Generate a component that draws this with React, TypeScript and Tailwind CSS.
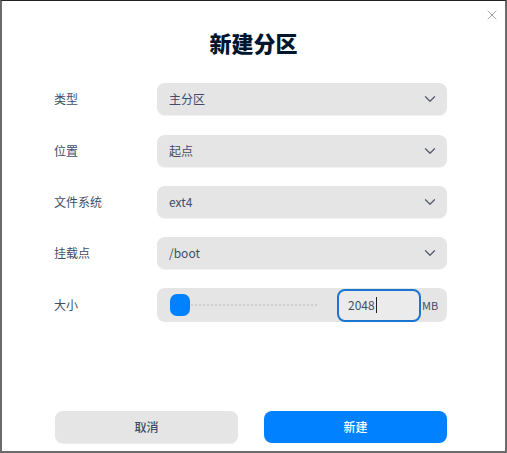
import { ChevronDown, X } from "lucide-react"

const font = { fontFamily: '"Noto Sans CJK SC", "Noto Sans", sans-serif' }

const rows = [
  { label: "类型", value: "主分区" },
  { label: "位置", value: "起点" },
  { label: "文件系统", value: "ext4" },
  { label: "挂载点", value: "/boot" },
]

function SelectBox({ value }: { value: string }) {
  return (
    <div className="flex h-[32px] w-[290px] items-center justify-between rounded-[8px] bg-[#e5e5e5] pl-[12px] pr-[8px] shadow-[0_1px_1px_rgba(0,0,0,0.06)]">
      <span className="text-[12px] text-[#414d68]">{value}</span>
      <ChevronDown className="h-[18px] w-[18px] text-[#555e6e]" strokeWidth={1.7} />
    </div>
  )
}

export default function App() {
  return (
    <div
      className="relative flex h-[453px] w-[507px] flex-col border-x-2 border-b-2 border-t border-x-[#6b6b6b] border-b-[#6b6b6b] border-t-[#222] bg-white"
      style={font}
    >
      {/* close button */}
      <button className="absolute right-[5px] top-[6px] text-[#8a8f99]">
        <X className="h-[16px] w-[16px]" strokeWidth={1.2} />
      </button>

      <h1 className="mt-[25px] text-center text-[22px] font-black leading-[32px] text-[#00162c]">新建分区</h1>

      {/* Form */}
      <div className="mt-[25px] flex flex-col gap-[19px] pl-[52px]">
        {rows.map((row, i) => (
          <div key={row.label} className={`flex items-center ${i === 1 ? "mt-[1px]" : ""}`}>
            <span className="w-[103px] text-[12px] text-[#414d68]">{row.label}</span>
            <SelectBox value={row.value} />
          </div>
        ))}

        <div className="flex items-center">
          <span className="w-[103px] text-[12px] text-[#414d68]">大小</span>
          <div className="flex h-[34px] w-[290px] items-center rounded-[8px] bg-[#e5e5e5]">
            <div className="ml-[13px] h-[22px] w-[20px] rounded-[7px] bg-[#0081ff]" />
            <div className="ml-[1px] h-0 w-[126px] border-t-2 border-dotted border-[#cfcfcf]" />
            <div className="ml-[20px] flex h-[33px] w-[84px] items-center rounded-[8px] border-2 border-[#1b75d0] bg-[#ebebeb] pl-[9px]">
              <span className="text-[12px] text-[#414d68]">2048</span>
              <span className="ml-[1px] h-[16px] w-px bg-[#222]" />
            </div>
            <span className="ml-[1px] text-[11px] text-[#414d68]">MB</span>
          </div>
        </div>
      </div>

      {/* Footer */}
      <div className="mt-auto mb-[8px] flex gap-[26px] pl-[53px]">
        <button className="h-[32px] w-[183px] rounded-[8px] bg-[#e5e5e5] text-[12px] font-medium text-[#414d68] shadow-[0_1px_1px_rgba(0,0,0,0.08)]">
          取消
        </button>
        <button className="h-[32px] w-[183px] rounded-[8px] bg-[#0081ff] text-[12px] font-medium text-white">
          新建
        </button>
      </div>
    </div>
  )
}
